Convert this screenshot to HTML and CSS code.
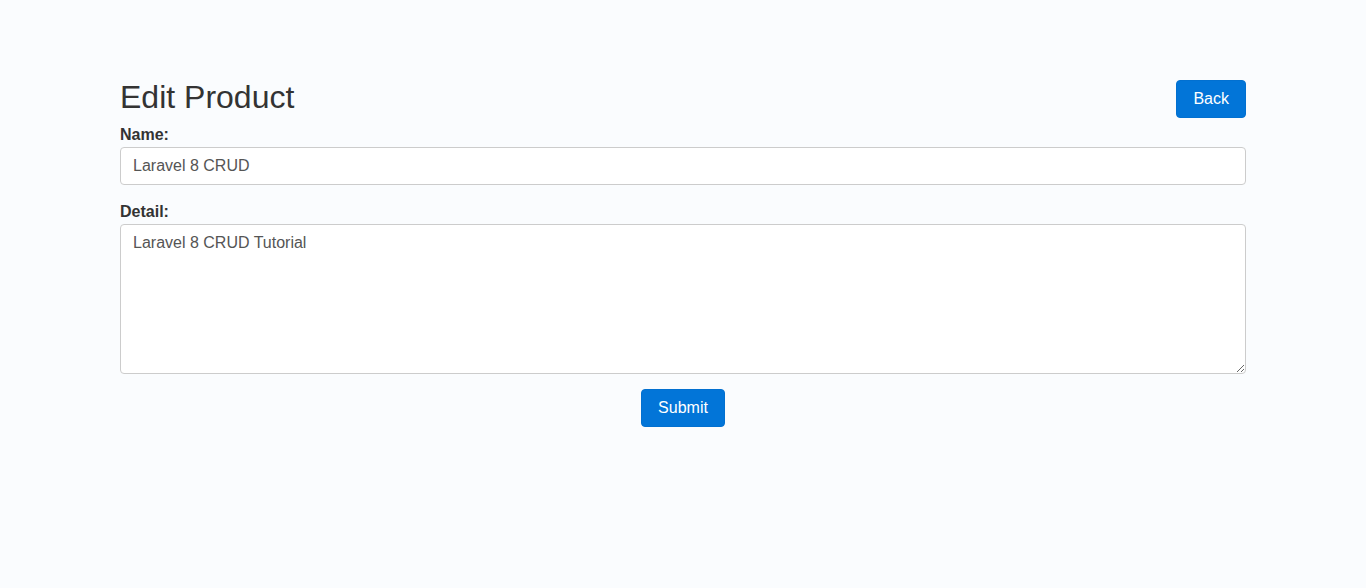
FILE: index.html
```html
<!DOCTYPE html>
<html>
  <head>
    <title>Edit Product</title>
    <link rel="stylesheet" href="styles.css">
  </head>
  <body>
    <div class="container">
      <div class="page-head">
        <h2>Edit Product</h2>
        <a class="btn" href="#">Back</a>
      </div>

      <form class="product-form">
        <div class="form-group">
          <label for="name">Name:</label>
          <input id="name" type="text" class="form-control" value="Laravel 8 CRUD" />
        </div>
        <div class="form-group">
          <label for="detail">Detail:</label>
          <textarea id="detail" class="form-control detail-box">Laravel 8 CRUD Tutorial</textarea>
        </div>
        <div class="form-actions">
          <button type="submit" class="btn">Submit</button>
        </div>
      </form>
    </div>
  </body>
</html>
```

FILE: styles.css
```css
body {
  background-color: #fafcfe;
  color: #333333;
  font-family: "Liberation Sans", Arial, sans-serif;
  font-size: 16px;
  margin: 0;
  padding: 80px 0 0;
}

.container {
  width: 1126px;
  margin: 0 auto;
}

.page-head {
  display: flex;
  justify-content: space-between;
  align-items: flex-start;
  margin-bottom: 7px;
}

.page-head h2 {
  margin: 0;
  font-size: 32px;
  font-weight: normal;
  line-height: 34px;
  color: #333333;
}

.btn {
  display: inline-block;
  box-sizing: border-box;
  height: 38px;
  padding: 0 16px;
  background-color: #0275d8;
  color: #ffffff;
  border: 1px solid #0270d0;
  border-radius: 4px;
  font-family: inherit;
  font-size: 16px;
  line-height: 36px;
  text-decoration: none;
  cursor: pointer;
}

.form-group {
  margin-bottom: 17px;
}

.form-group label {
  display: block;
  font-size: 16px;
  font-weight: bold;
  line-height: 20px;
  margin-bottom: 2px;
}

.form-control {
  display: block;
  box-sizing: border-box;
  width: 100%;
  height: 38px;
  padding: 6px 12px;
  border: 1px solid #cccccc;
  border-radius: 4px;
  background-color: #ffffff;
  color: #555555;
  font-family: inherit;
  font-size: 16px;
  line-height: 24px;
}

.detail-box {
  height: 150px;
  margin-bottom: -2px;
}

.form-actions {
  text-align: center;
}
```
